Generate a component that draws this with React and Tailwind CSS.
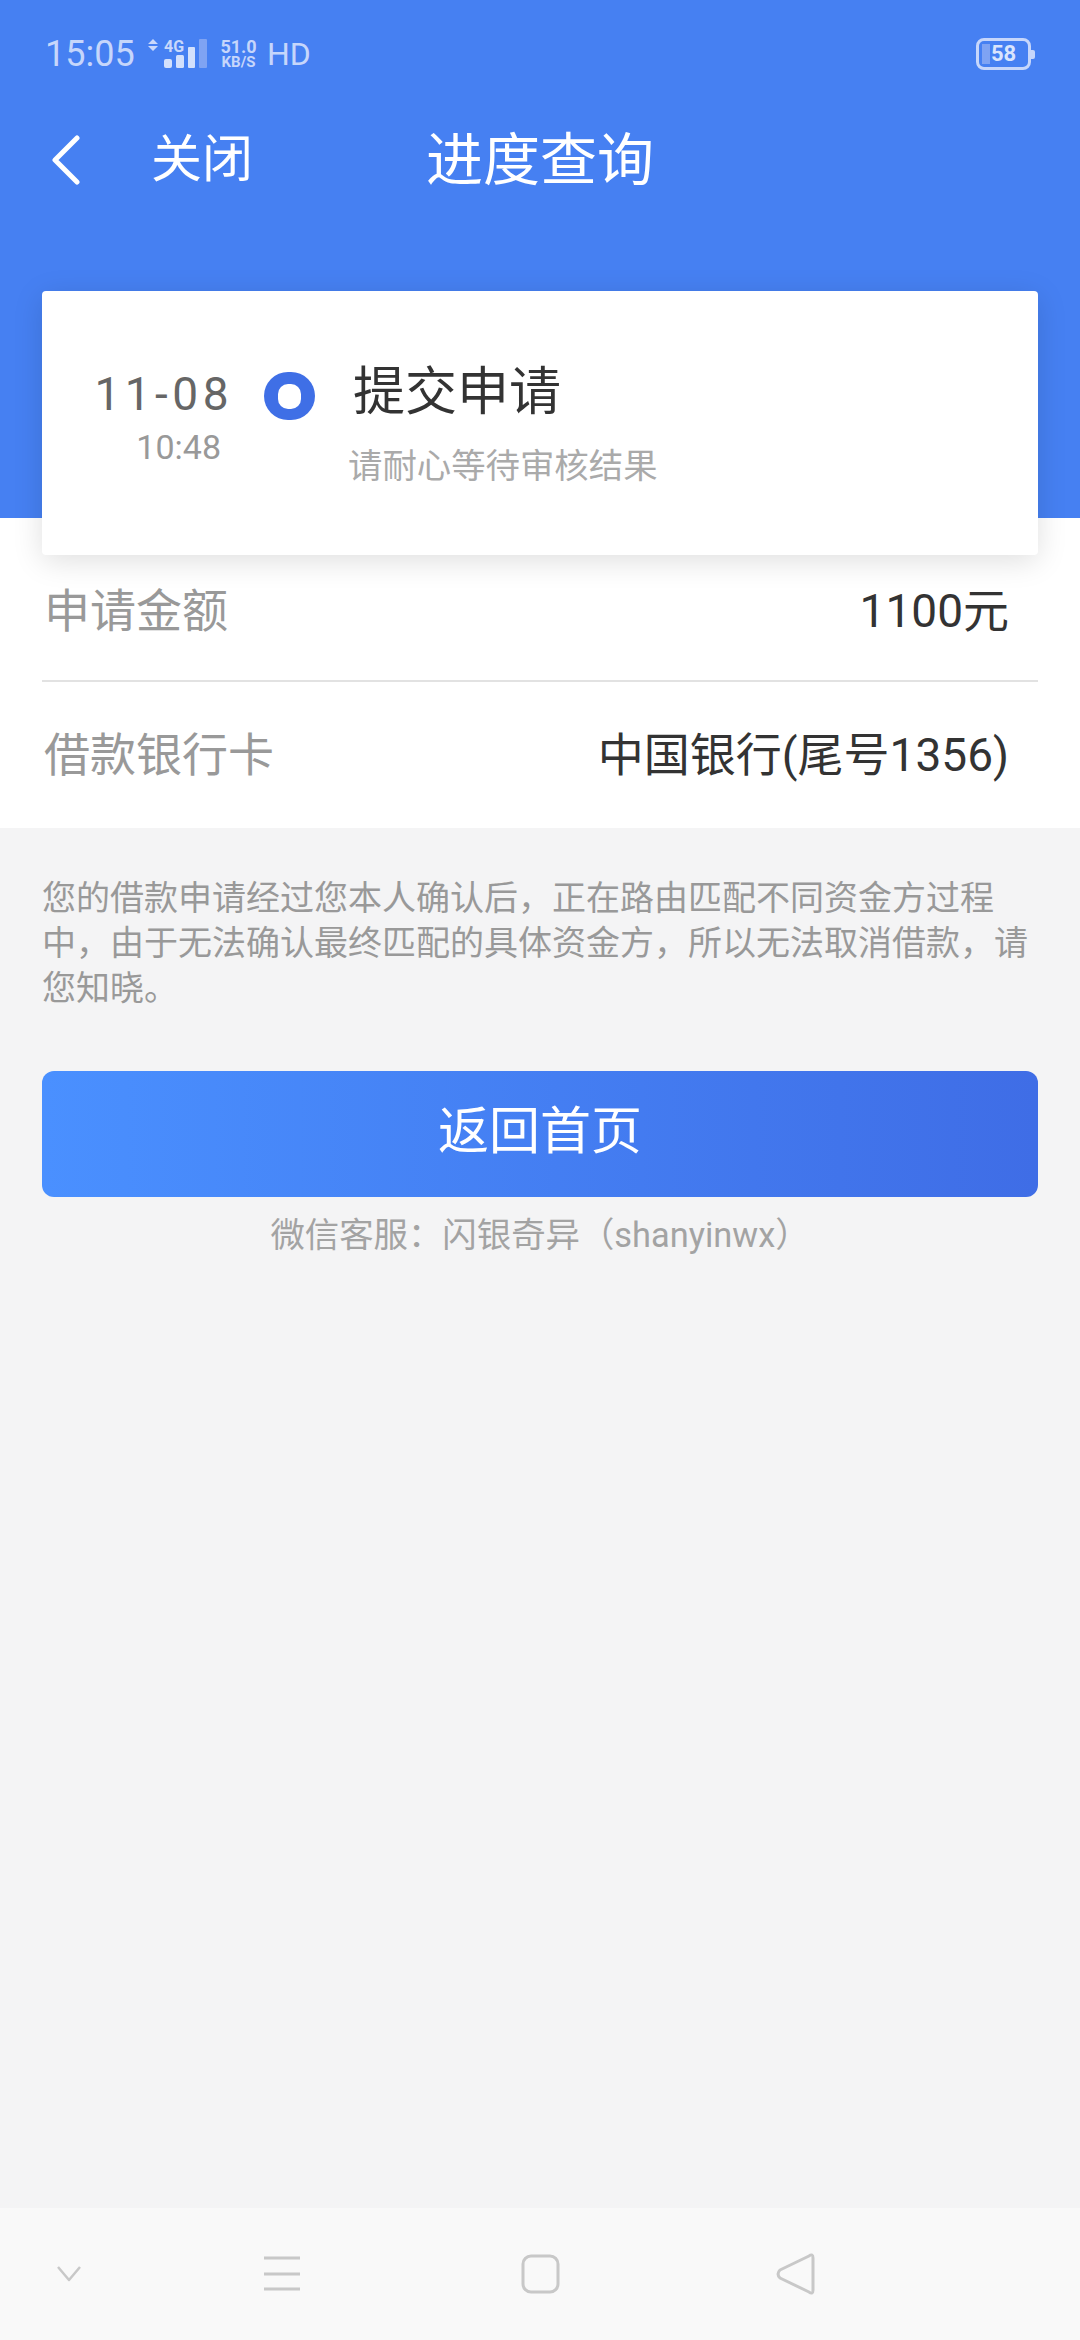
function SignalIcon() {
  return (
    <svg width="59" height="32" viewBox="0 0 59 32" className="block">
      <path d="M0 6 L5 1 L10 6 Z M0 8 L10 8 L5 13 Z" fill="#c9d8fb" />
      <text x="16" y="14" fontSize="16" fontWeight="700" fill="#c9d8fb" fontFamily="Roboto, sans-serif">4G</text>
      <rect x="16" y="21" width="8" height="9" rx="2" fill="#d3e0fc" />
      <rect x="28" y="17" width="8" height="13" rx="1.500" fill="#d3e0fc" />
      <rect x="40" y="9" width="7" height="21" rx="1" fill="#d3e0fc" />
      <rect x="51" y="1" width="8" height="29" rx="1" fill="#7fa3f3" />
    </svg>
  );
}

function StatusBar() {
  return (
    <div className="flex h-[108px] items-center justify-between pl-[45px] pr-[45px] text-[#c6d6fb]">
      <div className="flex items-center">
        <span className="w-[89px] text-[36px] leading-[40px]">15:05</span>
        <span className="ml-[14px]"><SignalIcon /></span>
        <span className="ml-[12px] flex w-[39px] flex-col items-center font-bold">
          <span className="text-[18px] leading-[17px]">51.0</span>
          <span className="text-[15px] leading-[15px]">KB/S</span>
        </span>
        <span className="ml-[9px] text-[32px] leading-[40px]">HD</span>
      </div>
      <div className="flex items-center">
        <div className="relative flex h-[32px] w-[55px] items-center justify-center overflow-hidden rounded-[8px] border-[3px] border-[#c6d6fb]">
          <span className="absolute bottom-[3px] left-[3px] top-[3px] w-[8px] bg-[#7fa3f3]" />
          <span className="relative text-[22px] font-bold leading-[26px] text-[#d9e4fd]">58</span>
        </div>
        <span className="h-[9px] w-[4px] rounded-r-[2px] bg-[#c6d6fb]" />
      </div>
    </div>
  );
}

function TopNav() {
  return (
    <div className="grid h-[104px] grid-cols-[1fr_auto_1fr] items-center text-white">
      <div className="flex items-center pl-[52px]">
        <svg width="28" height="50" viewBox="0 0 28 50" fill="none" stroke="currentColor" strokeWidth="5" strokeLinecap="round" strokeLinejoin="round">
          <path d="M25 3 L3 25 L25 47" />
        </svg>
        <span className="ml-[71px] text-[51px] leading-[60px]">关闭</span>
      </div>
      <h1 className="pt-[2px] text-[57px] font-normal leading-[64px]">进度查询</h1>
      <div />
    </div>
  );
}

function ProgressCard() {
  return (
    <div className="relative mx-[42px] -mt-[227px] flex h-[264px] rounded-[4px] bg-white shadow-[0_6px_30px_rgba(0,0,0,0.13)]">
      <div className="flex w-[191px] flex-col items-end pt-[78px]">
        <span className="text-[46px] leading-[50px] tracking-[4.500px] text-[#666666]">11-08</span>
        <span className="mt-[8px] pr-[12px] text-[34px] leading-[40px] text-[#999999]">10:48</span>
      </div>
      <div className="ml-[31px] mt-[81px] flex h-[48px] w-[51px] items-center justify-center rounded-full bg-[#3f6fe6]">
        <span className="h-[25px] w-[23px] rounded-[10px] bg-white" />
      </div>
      <div className="ml-[33px] flex flex-col pt-[71px]">
        <span className="ml-[5px] text-[52px] leading-[62px] text-[#333333]">提交申请</span>
        <span className="mt-[21px] text-[34.400px] leading-[42px] text-[#aaaaaa]">请耐心等待审核结果</span>
      </div>
    </div>
  );
}

function InfoRow({ label, value, className }) {
  return (
    <div className={`flex items-center justify-between pl-[2px] pr-[29px] text-[46px] leading-[62px] ${className}`}>
      <span className="text-[#999999]">{label}</span>
      <span className="text-[#333333]">{value}</span>
    </div>
  );
}

function BottomBar() {
  return (
    <div className="flex h-[132px] items-start bg-[#f9f9f9]">
      <svg width="1080" height="132" viewBox="0 0 1080 132" fill="none" stroke="#c8c8c8" strokeWidth="3">
        <path d="M58 59 L69 72 L80 59" strokeWidth="2.500" strokeLinejoin="round" />
        <path d="M264 50 H300 M264 66 H300 M264 81 H300" />
        <rect x="523" y="48" width="35" height="36" rx="8" />
        <path d="M813 50 Q813 45 809 48 L780 62 Q776 66 780 70 L809 84 Q813 87 813 82 Z" strokeLinejoin="round" />
      </svg>
    </div>
  );
}

export default function App() {
  return (
    <div className="flex h-[2340px] w-[1080px] flex-col overflow-hidden bg-[#f4f4f5] font-['Roboto','Noto_Sans_CJK_SC',sans-serif]">
      <header className="h-[518px] bg-[#4680f2]">
        <StatusBar />
        <TopNav />
      </header>

      <section className="bg-white">
        <ProgressCard />
        <div className="mx-[42px]">
          <InfoRow label="申请金额" value="1100元" className="h-[127px] border-b-2 border-[#e2e2e2] pb-[14px]" />
          <InfoRow label="借款银行卡" value="中国银行(尾号1356)" className="h-[146px]" />
        </div>
      </section>

      <main className="flex-1 px-[42px] pt-[48px]">
        <p className="text-[34px] leading-[45px] text-[#999999]">
          您的借款申请经过您本人确认后，正在路由匹配不同资金方过程中，由于无法确认最终匹配的具体资金方，所以无法取消借款，请您知晓。
        </p>
        <button className="mt-[60px] flex h-[126px] w-full items-center justify-center rounded-[12px] bg-gradient-to-r from-[#4a90ff] to-[#3f6de6] pb-[4px] text-[51px] leading-[60px] text-white">
          返回首页
        </button>
        <p className="mt-[15px] text-center text-[34.400px] leading-[46px] text-[#a3a3a3]">
          微信客服：闪银奇异（shanyinwx）
        </p>
      </main>

      <BottomBar />
    </div>
  );
}
